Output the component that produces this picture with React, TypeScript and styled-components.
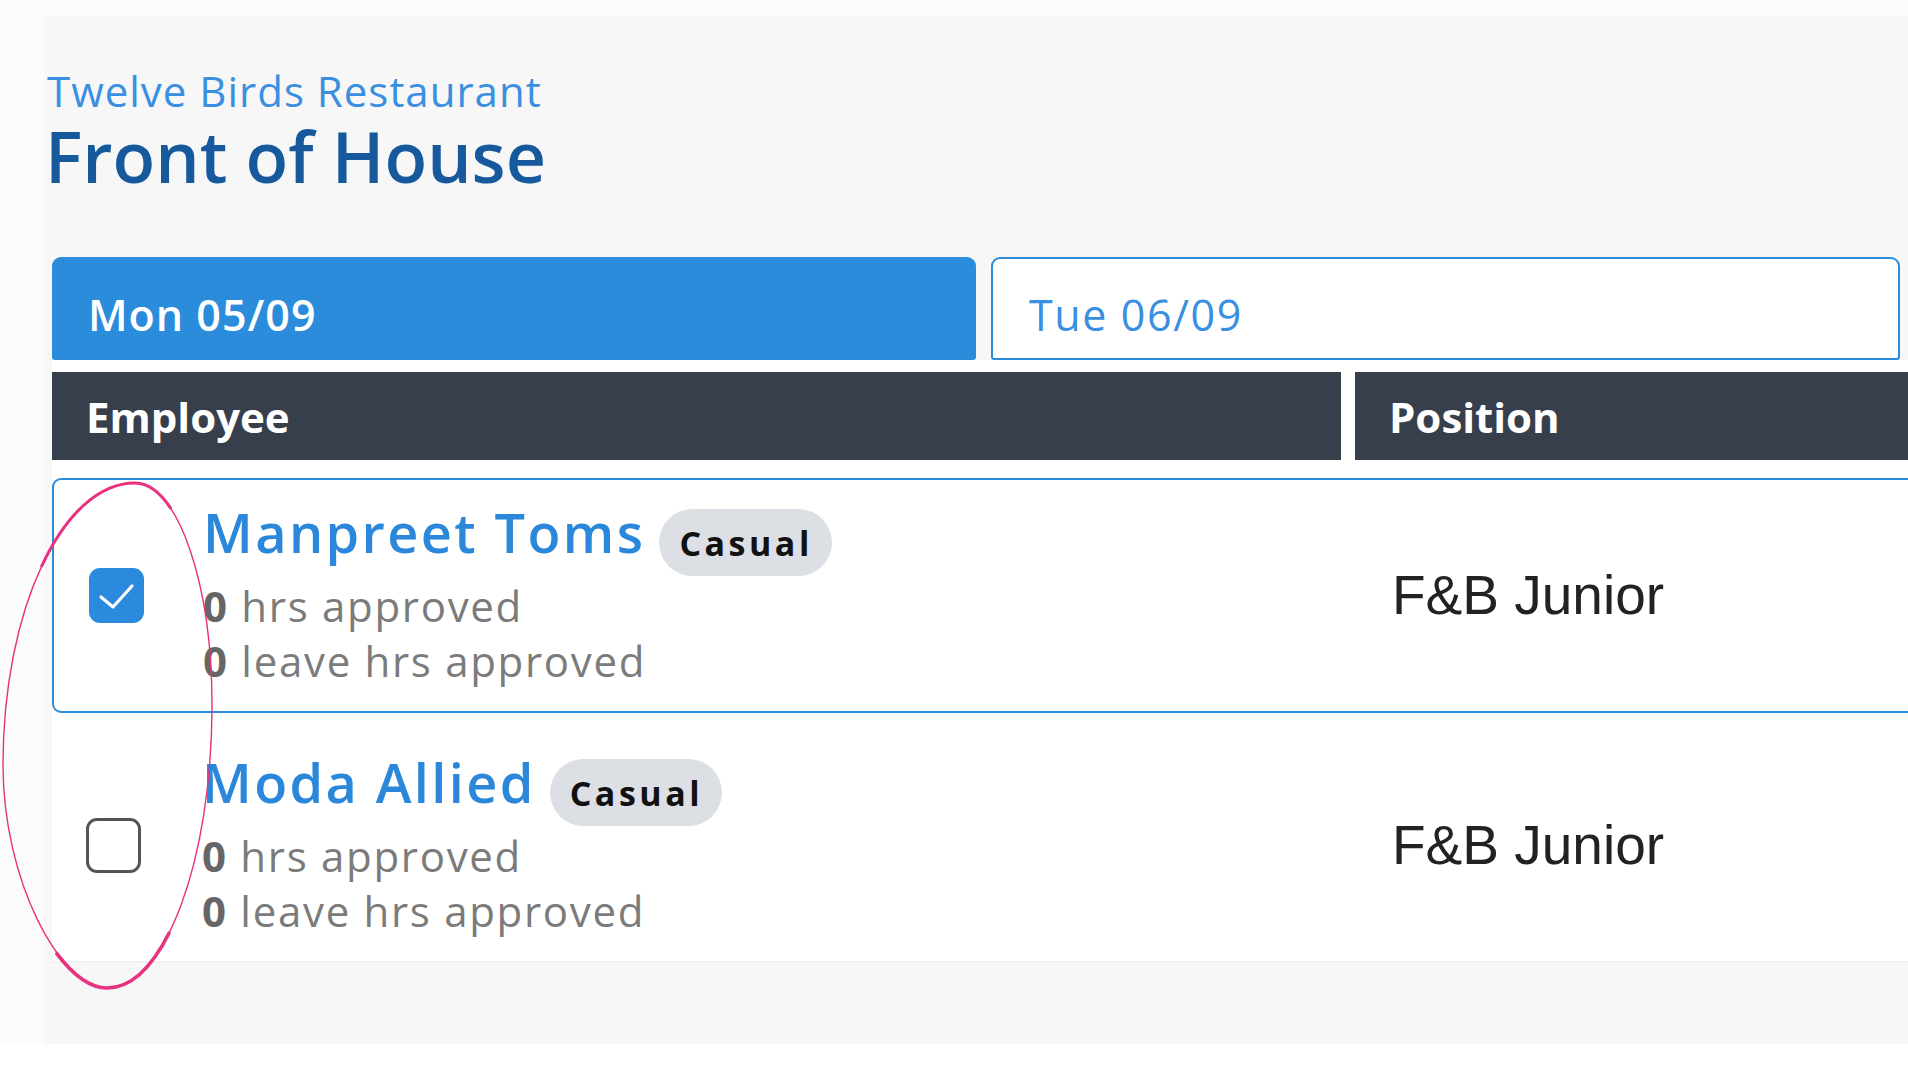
import React from "react";
import styled, { createGlobalStyle } from "styled-components";

const GlobalStyle = createGlobalStyle`
  html, body {
    margin: 0;
    padding: 0;
    background: #ffffff;
    overflow: hidden;
  }
  body {
    font-family: "Open Sans", "Noto Sans", sans-serif;
  }
  *, *::before, *::after {
    box-sizing: border-box;
  }
`;

const Page = styled.div`
  position: relative;
  width: 1908px;
  height: 1044px;
  background: #fbfbfb;
  padding: 17px 0 0 45px;
  overflow: hidden;
`;

const Panel = styled.main`
  height: 100%;
  background: #f7f7f7;
  padding-top: 49px;
  overflow: hidden;
`;

const TitleBlock = styled.header`
  display: flex;
  flex-direction: column;
`;

const Subtitle = styled.div`
  padding-left: 2px;
  font-size: 42px;
  line-height: 50px;
  font-weight: 400;
  letter-spacing: 1px;
  color: #3b8fe0;
`;

const Title = styled.h1`
  margin: 0;
  font-size: 70px;
  line-height: 80px;
  font-weight: 600;
  color: #16599c;
`;

const Tabs = styled.nav`
  display: grid;
  grid-template-columns: 924px 909px;
  column-gap: 15px;
  margin: 61px 0 0 7px;
`;

const Tab = styled.div<{ $active?: boolean }>`
  height: 103px;
  display: flex;
  align-items: center;
  padding: 11px 0 0 ${(p) => (p.$active ? 34 : 36)}px;
  border: 2px solid #2b8cdc;
  border-radius: 9px 9px 3px 3px;
  background: ${(p) => (p.$active ? "#2b8cdc" : "#ffffff")};
  color: ${(p) => (p.$active ? "#ffffff" : "#3a8fe0")};
  font-size: 43px;
  font-weight: ${(p) => (p.$active ? 600 : 500)};
  letter-spacing: ${(p) => (p.$active ? 1 : 1.6)}px;
`;

const Table = styled.section`
  width: 2000px;
  margin-left: 7px;
  padding-top: 12px;
  background: #ffffff;
`;

const HeaderRow = styled.div`
  display: grid;
  grid-template-columns: 1289px 1fr;
  column-gap: 14px;
`;

const HeaderCell = styled.div`
  height: 88px;
  display: flex;
  align-items: center;
  padding-left: 34px;
  background: #363f4b;
  color: #ffffff;
  font-size: 42px;
  font-weight: 700;
`;

const Rows = styled.div`
  display: flex;
  flex-direction: column;
  row-gap: 15px;
  margin-top: 18px;
`;

const Row = styled.div<{ $selected?: boolean }>`
  display: grid;
  grid-template-columns: 1289px 1fr;
  column-gap: 14px;
  align-items: center;
  padding: 22px 0 23px;
  border: 2px solid ${(p) => (p.$selected ? "#2b8cdc" : "transparent")};
  border-bottom-color: ${(p) => (p.$selected ? "#2b8cdc" : "#eef0f2")};
  border-radius: ${(p) => (p.$selected ? "9px" : "0")};
`;

const EmployeeCell = styled.div<{ $selected?: boolean }>`
  display: flex;
  align-items: center;
  column-gap: ${(p) => (p.$selected ? 59 : 61)}px;
  padding-left: ${(p) => (p.$selected ? 35 : 32)}px;
`;

const Checkbox = styled.span<{ $checked?: boolean }>`
  flex: none;
  width: 55px;
  height: 55px;
  display: flex;
  align-items: center;
  justify-content: center;
  border-radius: 11px;
  border: ${(p) => (p.$checked ? "none" : "3px solid #545454")};
  background: ${(p) => (p.$checked ? "#2b8ade" : "#ffffff")};
`;

const Info = styled.div`
  display: flex;
  flex-direction: column;
`;

const NameLine = styled.div`
  display: flex;
  align-items: flex-start;
  column-gap: 14px;
  margin-bottom: 2px;
`;

const Name = styled.span`
  font-size: 54px;
  line-height: 60px;
  font-weight: 600;
  letter-spacing: 2.4px;
  color: #2a87da;
`;

const Badge = styled.span`
  margin-top: 7px;
  height: 67px;
  display: flex;
  align-items: center;
  padding: 0 19px 0 20px;
  border-radius: 34px;
  background: #dcdfe3;
  color: #111111;
  font-size: 34px;
  font-weight: 700;
  letter-spacing: 3.5px;
`;

const Stat = styled.div`
  font-size: 42px;
  line-height: 55px;
  font-weight: 400;
  letter-spacing: 1.7px;
  color: #7b7b7b;

  b {
    font-weight: 700;
    color: #666666;
  }
`;

const PositionCell = styled.div`
  padding-left: 35px;
  font-family: "Liberation Sans", Arial, sans-serif;
  font-size: 55px;
  color: #222222;
`;

const Annotation = styled.svg`
  position: absolute;
  left: 0;
  top: 0;
  width: 260px;
  height: 1010px;
  overflow: visible;
  pointer-events: none;
`;

type Employee = {
  name: string;
  type: string;
  hours: number;
  leave: number;
  position: string;
  selected: boolean;
};

const employees: Employee[] = [
  { name: "Manpreet Toms", type: "Casual", hours: 0, leave: 0, position: "F&B Junior", selected: true },
  { name: "Moda Allied", type: "Casual", hours: 0, leave: 0, position: "F&B Junior", selected: false },
];

const CheckMark = () => (
  <svg width="55" height="55" viewBox="0 0 55 55">
    <polyline
      points="12,29 24,39 43,18"
      fill="none"
      stroke="#ffffff"
      strokeWidth="3.2"
      strokeLinecap="round"
      strokeLinejoin="round"
    />
  </svg>
);

const PINK = "#e6327f";

export default function App() {
  return (
    <>
      <GlobalStyle />
      <Page>
        <Panel>
          <TitleBlock>
            <Subtitle>Twelve Birds Restaurant</Subtitle>
            <Title>Front of House</Title>
          </TitleBlock>

          <Tabs>
            <Tab $active>Mon 05/09</Tab>
            <Tab>Tue 06/09</Tab>
          </Tabs>

          <Table>
            <HeaderRow>
              <HeaderCell>Employee</HeaderCell>
              <HeaderCell>Position</HeaderCell>
            </HeaderRow>
            <Rows>
              {employees.map((e) => (
                <Row key={e.name} $selected={e.selected}>
                  <EmployeeCell $selected={e.selected}>
                    <Checkbox $checked={e.selected}>{e.selected && <CheckMark />}</Checkbox>
                    <Info>
                      <NameLine>
                        <Name>{e.name}</Name>
                        <Badge>{e.type}</Badge>
                      </NameLine>
                      <Stat>
                        <b>{e.hours}</b> hrs approved
                      </Stat>
                      <Stat>
                        <b>{e.leave}</b> leave hrs approved
                      </Stat>
                    </Info>
                  </EmployeeCell>
                  <PositionCell>{e.position}</PositionCell>
                </Row>
              ))}
            </Rows>
          </Table>
        </Panel>

        <Annotation viewBox="0 0 260 1010">
          <path
            d="M 135 483 C 177.5 483, 212 582.9, 212 705 C 212 860.6, 164.8 988, 107 988 C 60 988, 3 880, 3 765 C 3 609.9, 62.4 483, 135 483 Z"
            fill="none"
            stroke={PINK}
            strokeWidth="1.4"
          />
          <path
            d="M 41.8 565.8 C 65.7 514.7, 98.7 483, 135 483 C 147.75 483, 159.78 492, 170.4 507.8"
            fill="none"
            stroke={PINK}
            strokeWidth="3"
            strokeLinecap="round"
          />
          <path
            d="M 169 933.2 C 151.6 967.6, 130.3 988, 107 988 C 90.55 988, 72.87 974.77, 56.78 953.6"
            fill="none"
            stroke={PINK}
            strokeWidth="3.6"
            strokeLinecap="round"
          />
        </Annotation>
      </Page>
    </>
  );
}
